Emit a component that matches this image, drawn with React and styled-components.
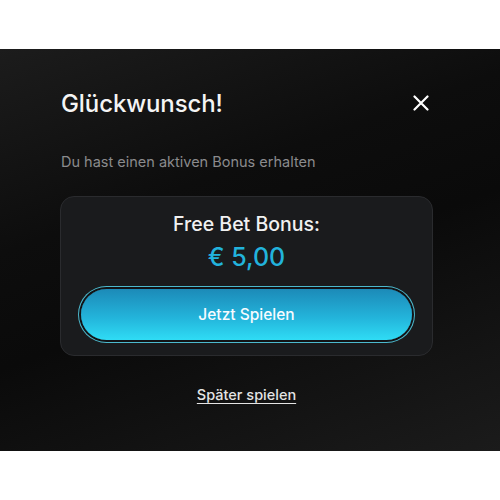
import React from "react";
import styled, { createGlobalStyle } from "styled-components";

const GlobalStyle = createGlobalStyle`
  body {
    margin: 0;
    background: #ffffff;
    font-family: Inter, "Noto Sans", sans-serif;
  }
`;

const Page = styled.div`
  padding-top: 49px;
`;

const Panel = styled.div`
  height: 402px;
  box-sizing: border-box;
  padding: 36px 67px 0 60px;
  background: linear-gradient(160deg, #1c1c1c 0%, #0d0d0d 35%, #0a0a0a 55%, #1b1b1b 100%);
`;

const Head = styled.div`
  display: flex;
  align-items: center;
  justify-content: space-between;
  height: 36px;
`;

const Title = styled.h2`
  margin: 0 0 0 1px;
  color: #f4f4f4;
  font-size: 24px;
  font-weight: 500;
  letter-spacing: -0.1px;
`;

const CloseButton = styled.button`
  display: flex;
  align-items: center;
  justify-content: center;
  width: 24px;
  height: 24px;
  padding: 0;
  border: none;
  background: none;
  color: #ffffff;
  cursor: pointer;
`;

const Subtitle = styled.p`
  margin: 32px 0 0 1px;
  color: #8b8b8d;
  font-size: 14.5px;
  line-height: 18px;
`;

const Card = styled.div`
  margin-top: 25px;
  height: 160px;
  box-sizing: border-box;
  padding: 14px 18px 0;
  display: flex;
  flex-direction: column;
  align-items: center;
  background: #1a1b1d;
  border: 1px solid #2a2b2e;
  border-radius: 14px;
`;

const BonusLabel = styled.div`
  color: #f1f1f1;
  font-size: 19.5px;
  font-weight: 500;
  line-height: 26px;
`;

const Amount = styled.div`
  margin-top: 5px;
  color: #22b3dc;
  font-size: 25px;
  font-weight: 500;
  line-height: 30px;
`;

const PlayButton = styled.button`
  margin-top: 17px;
  width: 331px;
  height: 51px;
  border: none;
  border-radius: 26px;
  background: linear-gradient(180deg, #1c8ab8 0%, #23b3da 55%, #2fdcf5 100%);
  box-shadow: 0 0 0 2px #121316, 0 0 0 3px #4cb9cd;
  color: #f6fbff;
  font-family: inherit;
  font-size: 15.5px;
  font-weight: 500;
  cursor: pointer;
`;

const LaterLink = styled.a`
  display: block;
  margin-top: 30px;
  text-align: center;
  color: #e4e4e4;
  font-size: 14.5px;
  font-weight: 500;
  text-decoration: underline;
  text-underline-offset: 3px;
  cursor: pointer;
`;

const App = () => {
  return (
    <Page>
      <GlobalStyle />
      <Panel>
        <Head>
          <Title>Glückwunsch!</Title>
          <CloseButton aria-label="Schließen">
            <svg width="16" height="16" viewBox="0 0 16 16" fill="none">
              <path d="M1.5 1.5L14.5 14.5M14.5 1.5L1.5 14.5" stroke="currentColor" strokeWidth="2.2" strokeLinecap="round" />
            </svg>
          </CloseButton>
        </Head>
        <Subtitle>Du hast einen aktiven Bonus erhalten</Subtitle>
        <Card>
          <BonusLabel>Free Bet Bonus:</BonusLabel>
          <Amount>€ 5,00</Amount>
          <PlayButton>Jetzt Spielen</PlayButton>
        </Card>
        <LaterLink>Später spielen</LaterLink>
      </Panel>
    </Page>
  );
};

export default App;
